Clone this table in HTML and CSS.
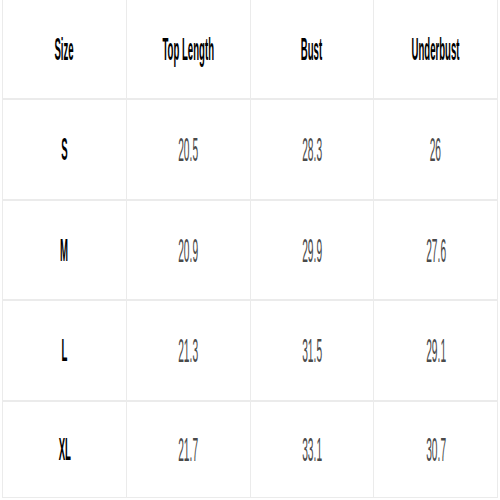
FILE: index.html
```html
<!DOCTYPE html>
<html>
<head>
<meta charset="utf-8">
<link rel="stylesheet" href="styles.css">
</head>
<body>
<div class="grid">
  <div class="cell head"><span>Size</span></div>
  <div class="cell head"><span>Top Length</span></div>
  <div class="cell head"><span>Bust</span></div>
  <div class="cell head"><span>Underbust</span></div>

  <div class="cell size"><span>S</span></div>
  <div class="cell val"><span>20.5</span></div>
  <div class="cell val"><span>28.3</span></div>
  <div class="cell val"><span>26</span></div>

  <div class="cell size"><span>M</span></div>
  <div class="cell val"><span>20.9</span></div>
  <div class="cell val"><span>29.9</span></div>
  <div class="cell val"><span>27.6</span></div>

  <div class="cell size"><span>L</span></div>
  <div class="cell val"><span>21.3</span></div>
  <div class="cell val"><span>31.5</span></div>
  <div class="cell val"><span>29.1</span></div>

  <div class="cell size"><span>XL</span></div>
  <div class="cell val"><span>21.7</span></div>
  <div class="cell val"><span>33.1</span></div>
  <div class="cell val"><span>30.7</span></div>
</div>
</body>
</html>
```
FILE: styles.css
```css
html, body {
  margin: 0;
  padding: 0;
  background: #fff;
}
body {
  font-family: "Liberation Sans", Arial, sans-serif;
}
.grid {
  margin-left: 2px;
  width: 496px;
  box-sizing: border-box;
  display: grid;
  grid-template-columns: repeat(4, minmax(0, 1fr));
  grid-template-rows: 98px 99px 98px 99px 95px;
  column-gap: 1px;
  row-gap: 2px;
  padding: 0 1px 1px 1px;
  background: #ebebeb;
}
.cell {
  background: #fff;
  display: flex;
  align-items: center;
  justify-content: center;
  min-width: 0;
  overflow: visible;
}
.cell span {
  display: inline-block;
  flex: none;
  font-size: 31px;
  line-height: 1;
  transform: scaleX(0.31);
  white-space: nowrap;
}
.head span, .size span {
  font-weight: bold;
  color: #000;
}
.val span {
  color: #4a4a4a;
  font-size: 33px;
}
```
